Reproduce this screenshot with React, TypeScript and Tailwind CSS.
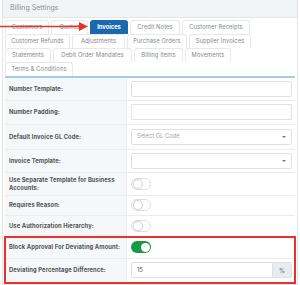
import React from 'react';

type Tab = { label: string; w: number; active?: boolean };

const tabRows: Tab[][] = [
  [
    { label: 'Customers', w: 44 },
    { label: 'Quotes', w: 37 },
    { label: 'Invoices', w: 38, active: true },
    { label: 'Credit Notes', w: 50 },
    { label: 'Customer Receipts', w: 68 },
  ],
  [
    { label: 'Customer Refunds', w: 65 },
    { label: 'Adjustments', w: 53 },
    { label: 'Purchase Orders', w: 60 },
    { label: 'Supplier Invoices', w: 62 },
  ],
  [
    { label: 'Statements', w: 46 },
    { label: 'Debit Order Mandates', w: 79 },
    { label: 'Billing Items', w: 49 },
    { label: 'Movements', w: 46 },
  ],
  [{ label: 'Terms & Conditions', w: 68 }],
];

function Toggle({ on = false }: { on?: boolean }) {
  return on ? (
    <div className="w-[20px] h-[12px] rounded-full bg-[#1a9a47] flex items-center justify-end px-[1.5px]">
      <div className="w-[9px] h-[9px] rounded-full bg-white" />
    </div>
  ) : (
    <div className="w-[20px] h-[12px] rounded-full bg-white border border-[#dcdfe2] flex items-center px-[0.5px]">
      <div className="w-[10px] h-[10px] rounded-full bg-white border border-[#d4d7da] shadow-[0_0_1px_rgba(0,0,0,0.15)]" />
    </div>
  );
}

function Caret() {
  return <span className="w-0 h-0 border-l-[2px] border-r-[2px] border-t-[2.5px] border-l-transparent border-r-transparent border-t-[#777]" />;
}

function Row({ label, h, children }: { label: React.ReactNode; h: string; children: React.ReactNode }) {
  return (
    <div className={`flex border-b border-[#e9ecee] ${h}`}>
      <div className="w-[122px] shrink-0 bg-[#f6f7f8] border-r border-[#eceef0] flex items-center pl-[4px] pr-[4px] text-[5.8px] leading-[7.5px] tracking-[0.1px] font-bold text-[#505356]">
        {label}
      </div>
      <div className="flex-1 flex items-center pl-[4px] pr-[3px]">{children}</div>
    </div>
  );
}

export default function App() {
  return (
    <div className="w-[300px] h-[285px] bg-white overflow-hidden relative" style={{ fontFamily: 'Inter, "Noto Sans", sans-serif' }}>
      <div className="mx-[2px] border-x border-b border-[#e3e7ea] h-[285px]">
        {/* Header */}
        <div className="h-[18px] bg-[#f1f4f5] border-b border-[#e3e7ea] flex items-center pl-[7px] text-[7px] text-[#8a8f93]">
          Billing Settings
        </div>

        <div className="px-[2px] pt-[2px]">
          {/* Tabs */}
          <div className="flex flex-col">
            {tabRows.map((row, i) => (
              <div key={i} className="flex gap-[2px] h-[14px]">
                {row.map((t) =>
                  t.active ? (
                    <div
                      key={t.label}
                      style={{ width: t.w }}
                      className="h-full rounded-t-[3px] bg-[#1a68ae] text-white font-bold text-[5.8px] flex items-center justify-center"
                    >
                      {t.label}
                    </div>
                  ) : (
                    <div
                      key={t.label}
                      style={{ width: t.w }}
                      className="h-full rounded-t-[3px] border border-b-0 border-[#e6e8ea] text-[#85898d] text-[5.8px] tracking-[0.1px] flex items-center justify-center whitespace-nowrap"
                    >
                      {t.label}
                    </div>
                  )
                )}
              </div>
            ))}
          </div>
          <div className="h-[1.5px] bg-[#a9c9e8]" />

          {/* Form */}
          <Row label="Number Template:" h="h-[23px]">
            <div className="w-full h-[16px] border border-[#dde1e4] rounded-[2px]" />
          </Row>
          <Row label="Number Padding:" h="h-[24px]">
            <div className="w-full h-[16px] border border-[#dde1e4] rounded-[2px]" />
          </Row>
          <Row label="Default Invoice GL Code:" h="h-[25px]">
            <div className="w-full h-[16px] border border-[#dde1e4] rounded-[2px] flex items-center justify-between pl-[5px] pr-[5px] text-[5.8px] text-[#a3a7ab]">
              <span>Select GL Code</span>
              <Caret />
            </div>
          </Row>
          <Row label="Invoice Template:" h="h-[23px]">
            <div className="w-full h-[16px] border border-[#dde1e4] rounded-[2px] flex items-center justify-end pr-[5px]">
              <Caret />
            </div>
          </Row>
          <Row
            label={
              <span>
                Use Separate Template for Business
                <br />
                Accounts:
              </span>
            }
            h="h-[23px]"
          >
            <Toggle />
          </Row>
          <Row label="Requires Reason:" h="h-[20px]">
            <Toggle />
          </Row>
          <Row label="Use Authorization Hierarchy:" h="h-[21px]">
            <Toggle />
          </Row>
          <div className="outline-2 outline-[#e8322c] -outline-offset-1">
            <Row label="Block Approval For Deviating Amount:" h="h-[22px]">
              <Toggle on />
            </Row>
            <Row label="Deviating Percentage Difference:" h="h-[24px]">
              <div className="w-full h-[16px] border border-[#dde1e4] rounded-[2px] flex">
                <div className="flex-1 flex items-center pl-[5px] text-[5.8px] text-[#555]">15</div>
                <div className="w-[19px] bg-[#e9ecef] border-l border-[#dde1e4] flex items-center justify-center text-[6px] text-[#666]">%</div>
              </div>
            </Row>
          </div>
        </div>
      </div>

      {/* Red arrow annotation */}
      <svg className="absolute left-0 top-0" width="92" height="36" viewBox="0 0 92 36">
        <line x1="0" y1="26.5" x2="81" y2="26.5" stroke="#e53229" strokeWidth="1.6" />
        <polygon points="79,22 88,26.5 79,31" fill="#e53229" />
      </svg>
    </div>
  );
}
